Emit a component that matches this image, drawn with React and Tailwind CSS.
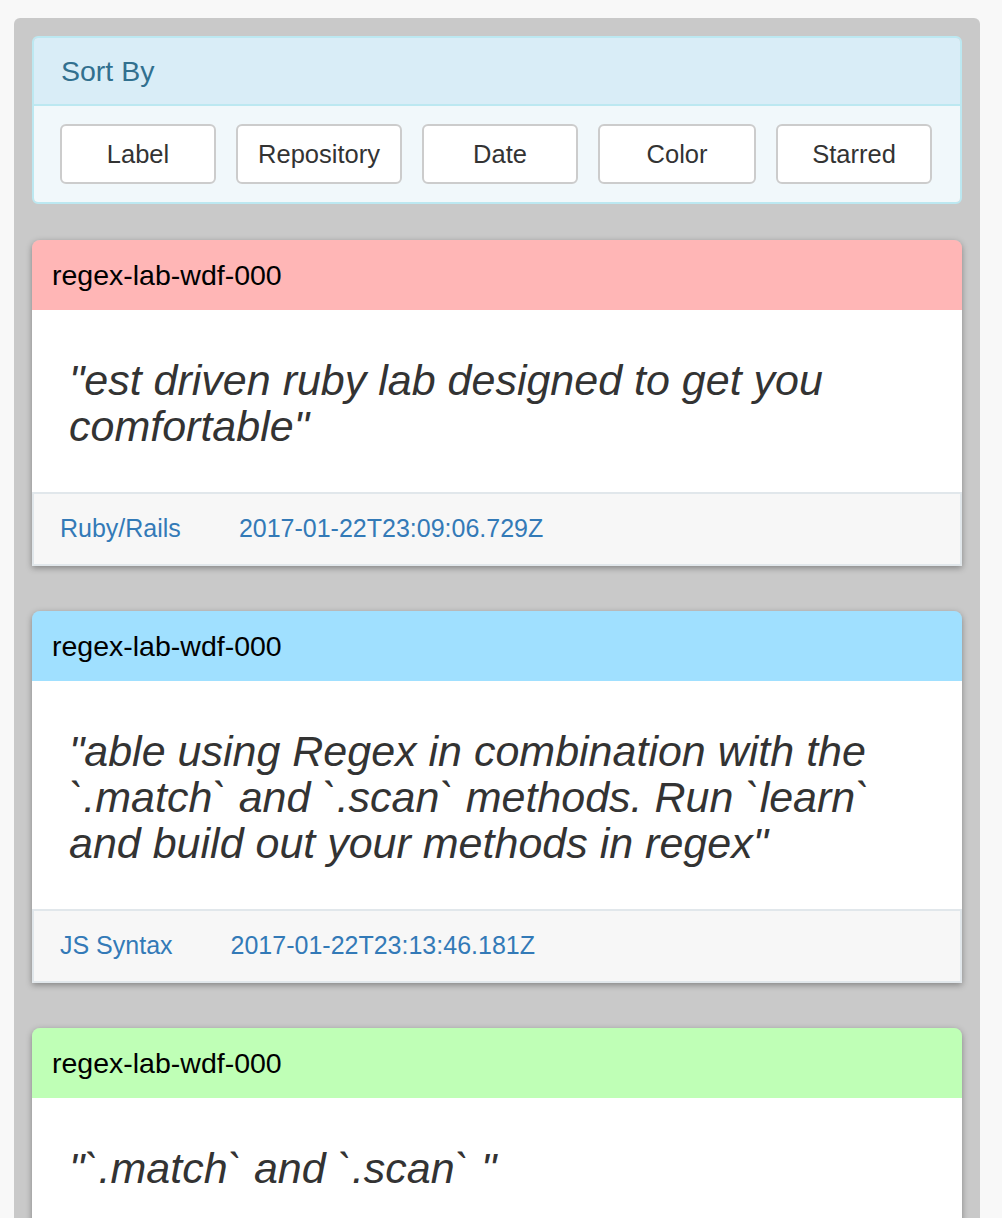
import React from 'react';

const sortButtons = [
  { label: 'Label', w: 'w-[156px]' },
  { label: 'Repository', w: 'w-[166px]' },
  { label: 'Date', w: 'w-[156px]' },
  { label: 'Color', w: 'w-[158px]' },
  { label: 'Starred', w: 'w-[156px]' },
];

const cards = [
  {
    repo: 'regex-lab-wdf-000',
    header: 'bg-[#ffb6b6]',
    quote: '"est driven ruby lab designed to get you comfortable"',
    label: 'Ruby/Rails',
    date: '2017-01-22T23:09:06.729Z',
  },
  {
    repo: 'regex-lab-wdf-000',
    header: 'bg-[#a0e0ff]',
    quote: '"able using Regex in combination with the `.match` and `.scan` methods. Run `learn` and build out your methods in regex"',
    label: 'JS Syntax',
    date: '2017-01-22T23:13:46.181Z',
  },
  {
    repo: 'regex-lab-wdf-000',
    header: 'bg-[#bfffb6]',
    quote: '"`.match` and `.scan` "',
    label: 'Ruby/Rails',
    date: '2017-01-22T23:14:12.402Z',
  },
];

function SortPanel() {
  return (
    <div className="border-2 border-[#bce8f1] rounded-[6px] overflow-hidden">
      <div className="h-[68px] bg-[#d9edf7] border-b-2 border-[#bce8f1] flex items-center pl-[27px] text-[28.5px] text-[#31708f]">
        Sort By
      </div>
      <div className="bg-[#f1f8fb] py-[18px] pl-[26px] flex gap-[20px]">
        {sortButtons.map((b) => (
          <button
            key={b.label}
            className={`${b.w} h-[60px] bg-white border-2 border-[#cccccc] rounded-[6px] text-[25.5px] text-[#333]`}
          >
            {b.label}
          </button>
        ))}
      </div>
    </div>
  );
}

function QuoteCard({ card }) {
  return (
    <div className="mb-[45px] rounded-t-[8px] shadow-[0_2px_6px_rgba(0,0,0,0.35)]">
      <div className={`${card.header} h-[70px] rounded-t-[8px] flex items-center pl-[20px] text-[28.5px] text-black`}>
        {card.repo}
      </div>
      <div className="bg-white px-[37px] pt-[47px] pb-[43px]">
        <p className="italic text-[43px] leading-[46px] text-[#333]">{card.quote}</p>
      </div>
      <div className="bg-[#f7f7f7] border-2 border-[#e1e7eb] h-[74px] flex items-center pl-[26px]">
        <span className="text-[25px] text-[#337ab7]">{card.label}</span>
        <span className="ml-[58px] text-[25px] text-[#337ab7]">{card.date}</span>
      </div>
    </div>
  );
}

export default function App() {
  return (
    <div className="min-h-screen bg-[#f8f8f8] pt-[18px] px-[14px] pr-[22px] font-['Liberation_Sans',Arial,sans-serif]">
      <div className="bg-[#c9c9c9] rounded-t-[6px] p-[18px] min-h-[1200px]">
        <SortPanel />
        <div className="mt-[36px]">
          {cards.map((c, i) => (
            <QuoteCard key={i} card={c} />
          ))}
        </div>
      </div>
    </div>
  );
}
